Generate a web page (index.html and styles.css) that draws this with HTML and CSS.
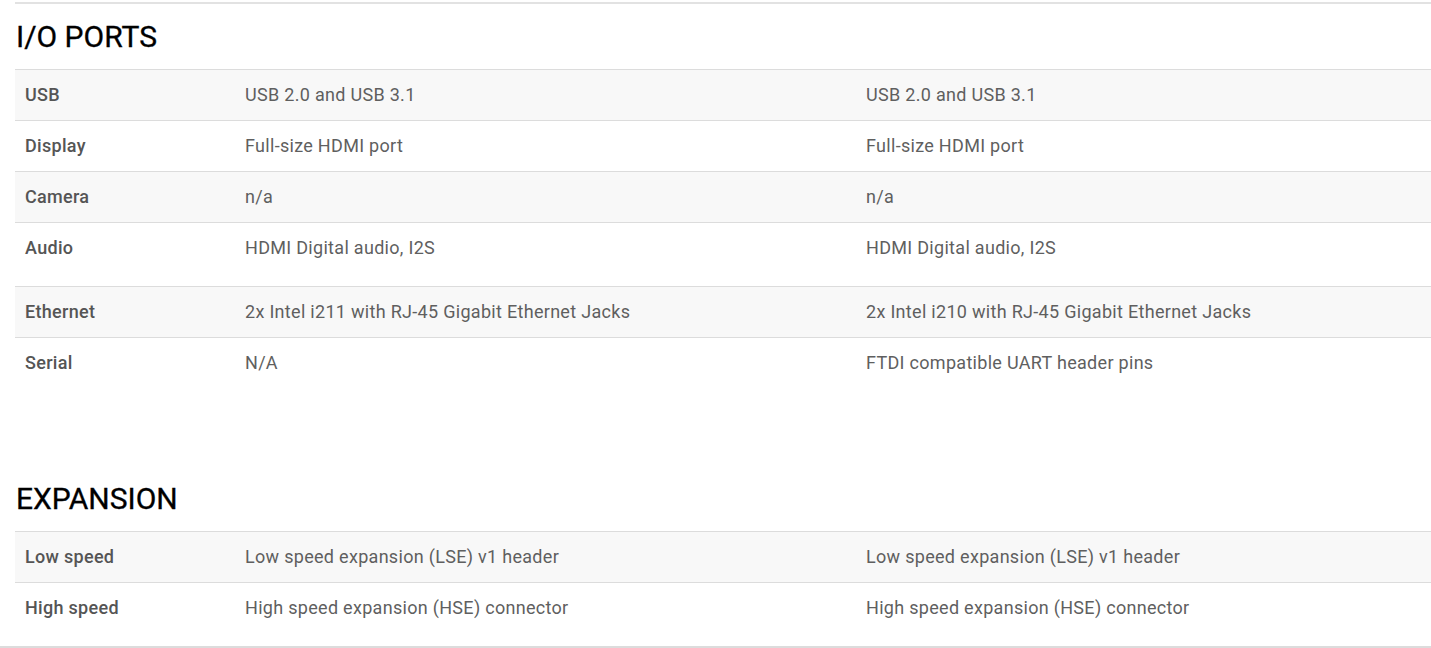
FILE: index.html
```html
<!DOCTYPE html>
<html>
<head>
<meta charset="utf-8">
<link rel="stylesheet" href="styles.css">
</head>
<body>
<div class="page">
  <section class="spec spec-io">
    <h2 class="spec-title">I/O PORTS</h2>
    <table class="spec-table">
      <colgroup><col class="c-label"><col class="c-a"><col class="c-b"></colgroup>
      <tbody>
        <tr class="shade"><th>USB</th><td>USB 2.0 and USB 3.1</td><td>USB 2.0 and USB 3.1</td></tr>
        <tr><th>Display</th><td>Full-size HDMI port</td><td>Full-size HDMI port</td></tr>
        <tr class="shade"><th>Camera</th><td>n/a</td><td>n/a</td></tr>
        <tr class="tall"><th>Audio</th><td>HDMI Digital audio, I2S</td><td>HDMI Digital audio, I2S</td></tr>
        <tr class="shade"><th>Ethernet</th><td>2x Intel i211 with RJ-45 Gigabit Ethernet Jacks</td><td>2x Intel i210 with RJ-45 Gigabit Ethernet Jacks</td></tr>
        <tr class="last"><th>Serial</th><td>N/A</td><td>FTDI compatible UART header pins</td></tr>
      </tbody>
    </table>
  </section>
  <section class="spec spec-exp">
    <h2 class="spec-title">EXPANSION</h2>
    <table class="spec-table">
      <colgroup><col class="c-label"><col class="c-a"><col class="c-b"></colgroup>
      <tbody>
        <tr class="shade"><th>Low speed</th><td>Low speed expansion (LSE) v1 header</td><td>Low speed expansion (LSE) v1 header</td></tr>
        <tr class="last"><th>High speed</th><td>High speed expansion (HSE) connector</td><td>High speed expansion (HSE) connector</td></tr>
      </tbody>
    </table>
  </section>
</div>
<div class="rule"></div>
</body>
</html>
```
FILE: styles.css
```css
html, body {
  margin: 0;
  padding: 0;
  background: #fff;
}
body {
  font-family: Roboto, "Liberation Sans", Arial, sans-serif;
  padding-top: 2px;
}
.page {
  padding-left: 15px;
}
.spec-io {
  border-top: 2px solid #e2e2e2;
}
.spec-exp {
  margin-top: 93px;
}
.spec-title {
  margin: 15px 0 14px 1px;
  font-size: 30px;
  line-height: 36px;
  font-weight: 400;
  color: #000;
  -webkit-text-stroke: 0.3px #000;
}
.spec-exp .spec-title {
  margin-top: 0;
}
.spec-table {
  width: 100%;
  border-collapse: collapse;
  table-layout: fixed;
  font-size: 18px;
  line-height: 24px;
  letter-spacing: 0.3px;
}
.c-label { width: 220px; }
.c-a { width: 621px; }
.spec-table tr {
  border-top: 1px solid #dcdcdc;
}
.spec-table tr.shade {
  background: #f8f8f8;
}
.spec-table th,
.spec-table td {
  padding: 13px 10px 13px 10px;
  text-align: left;
  vertical-align: top;
}
.spec-table th {
  font-weight: 500;
  color: #555;
}
.spec-table td {
  font-weight: 400;
  color: #5f5f5f;
}
.spec-table tr.tall th,
.spec-table tr.tall td {
  padding-bottom: 26px;
}
.rule {
  margin-top: 13px;
  border-top: 2px solid #dcdcdc;
}
```
